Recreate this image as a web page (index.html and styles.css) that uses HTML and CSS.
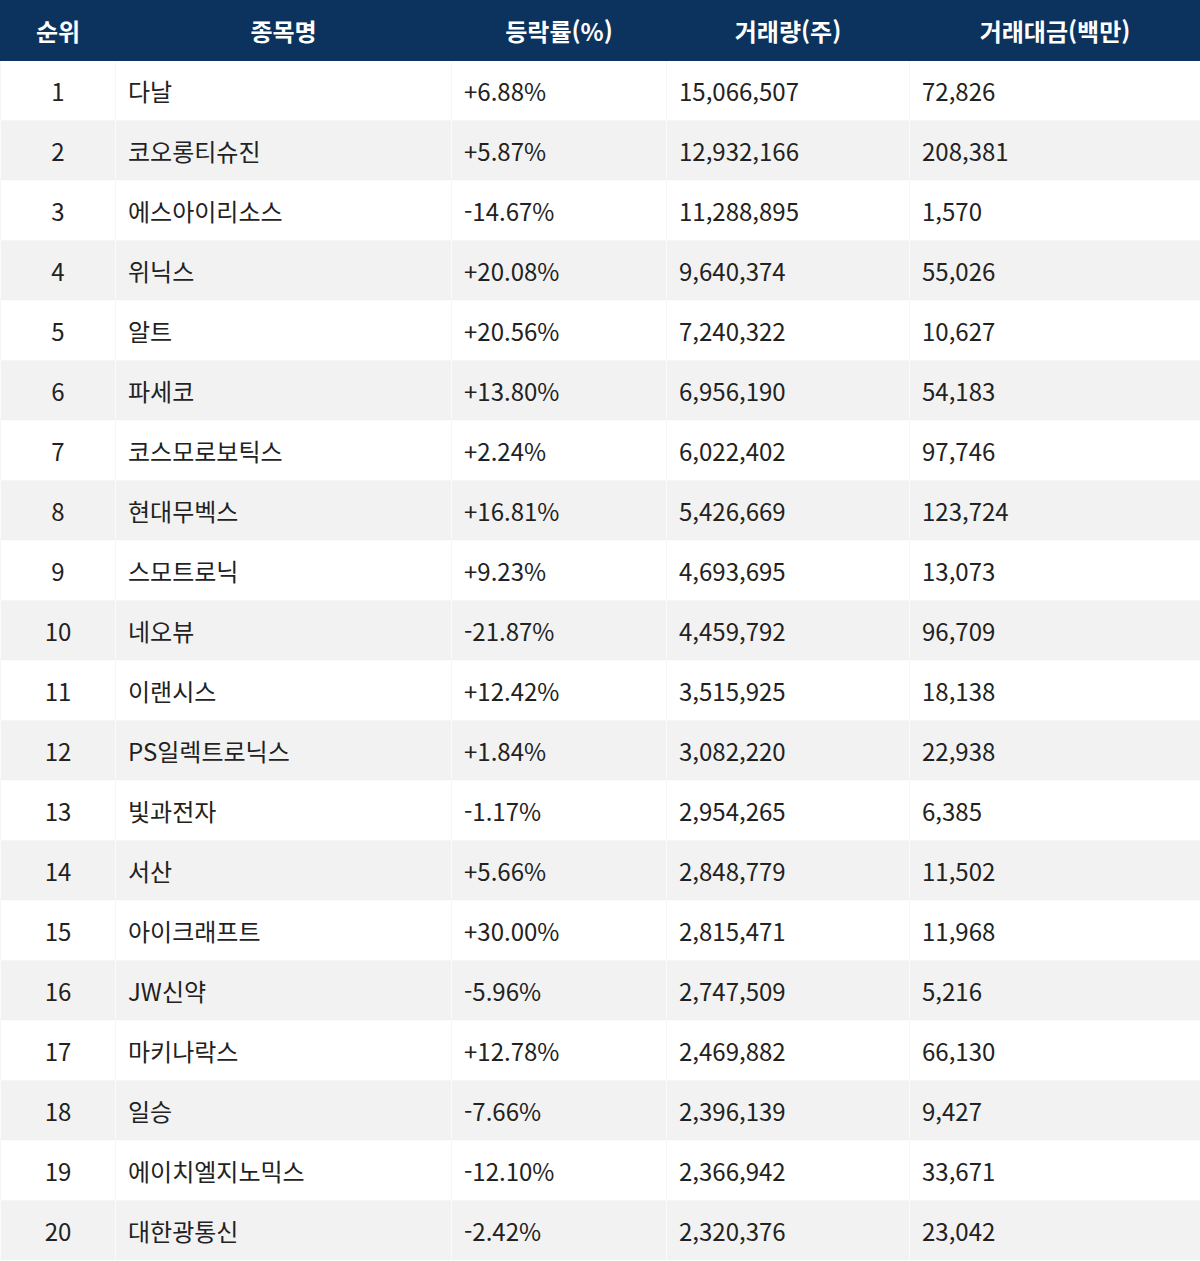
FILE: index.html
```html
<!DOCTYPE html>
<html lang="ko">
<head>
<meta charset="utf-8">
<title>거래량 상위 종목</title>
<link rel="stylesheet" href="styles.css">
</head>
<body>
<table class="rank-table">
  <colgroup>
    <col class="c-rank">
    <col class="c-name">
    <col class="c-rate">
    <col class="c-vol">
    <col class="c-amt">
  </colgroup>
  <thead>
    <tr><th>순위</th><th>종목명</th><th>등락률(%)</th><th>거래량(주)</th><th>거래대금(백만)</th></tr>
  </thead>
  <tbody>
    <tr><td class="rank">1</td><td>다날</td><td>+6.88%</td><td>15,066,507</td><td>72,826</td></tr>
    <tr><td class="rank">2</td><td>코오롱티슈진</td><td>+5.87%</td><td>12,932,166</td><td>208,381</td></tr>
    <tr><td class="rank">3</td><td>에스아이리소스</td><td>-14.67%</td><td>11,288,895</td><td>1,570</td></tr>
    <tr><td class="rank">4</td><td>위닉스</td><td>+20.08%</td><td>9,640,374</td><td>55,026</td></tr>
    <tr><td class="rank">5</td><td>알트</td><td>+20.56%</td><td>7,240,322</td><td>10,627</td></tr>
    <tr><td class="rank">6</td><td>파세코</td><td>+13.80%</td><td>6,956,190</td><td>54,183</td></tr>
    <tr><td class="rank">7</td><td>코스모로보틱스</td><td>+2.24%</td><td>6,022,402</td><td>97,746</td></tr>
    <tr><td class="rank">8</td><td>현대무벡스</td><td>+16.81%</td><td>5,426,669</td><td>123,724</td></tr>
    <tr><td class="rank">9</td><td>스모트로닉</td><td>+9.23%</td><td>4,693,695</td><td>13,073</td></tr>
    <tr><td class="rank">10</td><td>네오뷰</td><td>-21.87%</td><td>4,459,792</td><td>96,709</td></tr>
    <tr><td class="rank">11</td><td>이랜시스</td><td>+12.42%</td><td>3,515,925</td><td>18,138</td></tr>
    <tr><td class="rank">12</td><td>PS일렉트로닉스</td><td>+1.84%</td><td>3,082,220</td><td>22,938</td></tr>
    <tr><td class="rank">13</td><td>빛과전자</td><td>-1.17%</td><td>2,954,265</td><td>6,385</td></tr>
    <tr><td class="rank">14</td><td>서산</td><td>+5.66%</td><td>2,848,779</td><td>11,502</td></tr>
    <tr><td class="rank">15</td><td>아이크래프트</td><td>+30.00%</td><td>2,815,471</td><td>11,968</td></tr>
    <tr><td class="rank">16</td><td>JW신약</td><td>-5.96%</td><td>2,747,509</td><td>5,216</td></tr>
    <tr><td class="rank">17</td><td>마키나락스</td><td>+12.78%</td><td>2,469,882</td><td>66,130</td></tr>
    <tr><td class="rank">18</td><td>일승</td><td>-7.66%</td><td>2,396,139</td><td>9,427</td></tr>
    <tr><td class="rank">19</td><td>에이치엘지노믹스</td><td>-12.10%</td><td>2,366,942</td><td>33,671</td></tr>
    <tr><td class="rank">20</td><td>대한광통신</td><td>-2.42%</td><td>2,320,376</td><td>23,042</td></tr>
  </tbody>
</table>
</body>
</html>
```

FILE: styles.css
```css
html, body {
  margin: 0;
  padding: 0;
  background: #ffffff;
}

body {
  font-family: "Noto Sans CJK KR", "Noto Sans", sans-serif;
  color: #222222;
}

.rank-table {
  width: 1200px;
  border-collapse: collapse;
  table-layout: fixed;
  font-size: 24px;
}

.c-rank { width: 115px; }
.c-name { width: 336px; }
.c-rate { width: 215px; }
.c-vol  { width: 243px; }
.c-amt  { width: 291px; }

.rank-table th,
.rank-table td {
  height: 59px;
  padding: 0 12px;
  border: 1px solid #f6f6f6;
  box-sizing: border-box;
  line-height: 1;
  white-space: nowrap;
}

.rank-table thead tr {
  height: 60px;
}

.rank-table th {
  background: #0c335d;
  color: #ffffff;
  font-weight: 700;
  text-align: center;
  border-color: #0c335d;
  border-left: 1px solid #ffffff;
}

.rank-table th:first-child {
  border-left-color: #0c335d;
}

.rank-table tbody tr {
  height: 60px;
}

.rank-table td {
  font-weight: 400;
  text-align: left;
}

.rank-table td.rank {
  text-align: center;
}

.rank-table tbody tr:nth-child(even) td {
  background: #f2f2f2;
  border-color: #fbfbfb;
}
```
